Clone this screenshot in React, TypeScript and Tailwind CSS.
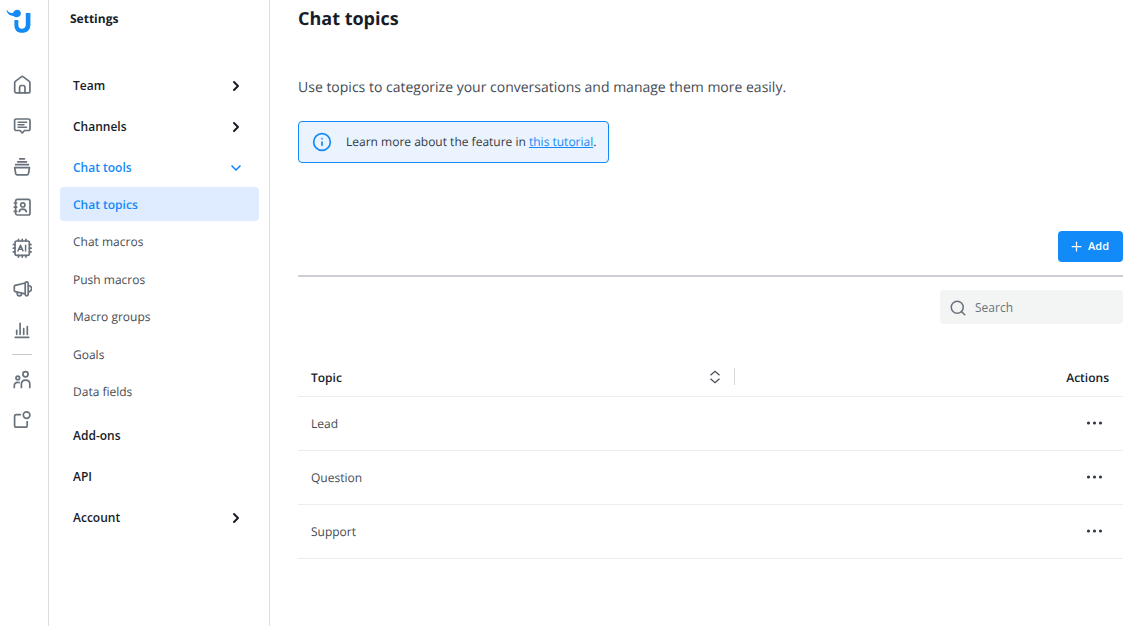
import { ChevronDown, ChevronRight, Info, Plus, Search } from "lucide-react";
import { clsx } from "clsx";

type IconProps = { children: React.ReactNode };

function RailIcon({ children }: IconProps) {
    return (
        <svg
            viewBox="0 0 20 20"
            className="h-5 w-5"
            fill="none"
            stroke="currentColor"
            strokeWidth="1.7"
            strokeLinecap="round"
            strokeLinejoin="round"
            aria-hidden="true"
        >
            {children}
        </svg>
    );
}

const railItems = [
    {
        label: "Home",
        icon: (
            <RailIcon>
                <path d="M2.7 7.6c0-.5.2-.9.6-1.200l6-4.500c.6-.5 1.400-.5 2 0l6 4.500c.4.3.6.7.6 1.200V16.200c0 1.100-.6 1.700-1.700 1.700H4.400c-1.100 0-1.700-.6-1.700-1.700z" />
                <path d="M7.600 17.900v-5.200c0-1.400.8-2.200 2-2.200h1.400c1.200 0 2 .8 2 2.200v5.200" />
            </RailIcon>
        ),
    },
    {
        label: "Conversations",
        icon: (
            <RailIcon>
                <path d="M4.300 3h12c1 0 1.700.7 1.700 1.700v8.100c0 1-.7 1.700-1.700 1.700h-3.800L10.300 17l-2.200-2.500H4.300c-1 0-1.700-.7-1.700-1.700V4.700C2.600 3.700 3.300 3 4.300 3z" />
                <path d="M6 6.200h8.600M6 8.700h6M6 11.200h8.600" strokeWidth="1.400" />
            </RailIcon>
        ),
    },
    {
        label: "Stack",
        icon: (
            <RailIcon>
                <path d="M7.700 1.800h4.800M5.700 4.800h8.800M3.700 7.700h12.800" />
                <path d="M2.700 10.700h14.800l-1 6c-.1.700-.5 1.100-1.200 1.100H4.900c-.7 0-1.100-.4-1.200-1.100z" />
            </RailIcon>
        ),
    },
    {
        label: "Contacts",
        icon: (
            <RailIcon>
                <rect x="3.600" y="2.400" width="14.400" height="15.600" rx="1.800" />
                <circle cx="10.800" cy="7.900" r="2.100" />
                <path d="M7.300 14.600c.3-1.600 1.500-2.400 3.500-2.400s3.200.8 3.500 2.400" />
                <path d="M2.300 6h2.400M2.300 10.200h2.400M2.300 14.400h2.400" />
            </RailIcon>
        ),
    },
    {
        label: "AI",
        icon: (
            <RailIcon>
                <rect x="3" y="3" width="14.400" height="14.400" rx="1.800" />
                <path d="M6.500 1.300V3M10.200 1.300V3M13.900 1.300V3M6.500 17.400v1.700M10.200 17.400v1.700M13.900 17.400v1.700M1.300 6.500H3M1.300 10.200H3M1.300 13.900H3M17.400 6.500h1.700M17.400 10.200h1.700M17.400 13.900h1.700" />
                <path d="M6 12.900l2.500-5.600 2.500 5.600M6.900 11.300h3.200M13.600 7.300v5.600" strokeWidth="1.500" />
            </RailIcon>
        ),
    },
    {
        label: "Campaigns",
        icon: (
            <RailIcon>
                <path d="M3.200 6.400L13.200 4M3.200 6.400c-.6.200-.9.600-.9 1.200v3.900c0 .6.300 1 .9 1.200l10 2.200" />
                <path d="M13.200 4.300c0-1 .7-1.500 1.500-1.500s1.500.5 1.500 1.500v11c0 1-.7 1.500-1.500 1.500s-1.500-.5-1.500-1.500z" />
                <path d="M5.200 13.200v1.300c0 1.500.8 2.400 2.200 2.400s2.200-.9 2.200-2.400M17.600 6.800c1.300.6 2 1.600 2 2.900s-.7 2.300-2 2.900" />
            </RailIcon>
        ),
    },
    {
        label: "Reports",
        icon: (
            <RailIcon>
                <path d="M3.300 17.400h13.400" />
                <path d="M4.700 14.300v-4M8.100 14.300V3.300M11.700 14.300V8.700M15.300 14.300V6.500" />
            </RailIcon>
        ),
    },
];

const railFooterItems = [
    {
        label: "Team",
        icon: (
            <RailIcon>
                <circle cx="13.500" cy="4.300" r="2.600" />
                <circle cx="5.800" cy="7.900" r="1.800" />
                <path d="M9.400 17.500v-3.200c0-2.600 1.600-4.100 4.200-4.100s4.200 1.500 4.200 4.100v3.200M2.300 17.500v-1.700c0-2.200 1.200-3.500 3.300-3.500.6 0 1.100.1 1.500.3" />
            </RailIcon>
        ),
    },
    {
        label: "Apps",
        icon: (
            <RailIcon>
                <circle cx="14.600" cy="5.100" r="3.300" />
                <path d="M8.300 4.600h-4C3.300 4.600 2.600 5.300 2.600 6.300v9.200c0 1 .7 1.700 1.700 1.700h9.200c1 0 1.700-.7 1.700-1.700v-4" />
            </RailIcon>
        ),
    },
];

const chatTools = [
    "Chat topics",
    "Chat macros",
    "Push macros",
    "Macro groups",
    "Goals",
    "Data fields",
];

const topics = ["Lead", "Question", "Support"];

function Rail() {
    return (
        <nav
            aria-label="Main"
            className="flex w-[49px] shrink-0 flex-col border-r border-[#dcdfe2] pr-1 text-[#69727c]"
        >
            <a href="#" aria-label="Dashboard" className="flex h-[65px] justify-center pt-2 pr-1">
                <svg viewBox="0 0 28 28" className="h-7 w-7" fill="none" aria-hidden="true">
                    <path
                        d="M.9 2c1.300 2.300 3.400 3.300 6.100 2.900C7.700 3 9.200 1.700 11.200 1.700c2.100 0 3.700 1.600 3.700 3.600s-1.500 3.900-3.900 3.900c-1.400 0-2.700-.4-3.500-1.300C4.100 7.900 1.300 5.900.5 2.300z"
                        fill="#128af8"
                    />
                    <path
                        d="M8.400 12h3.900v4.700c0 2.700 1.300 4 3.500 4s4-1.300 4-4V5h4.600v11.700c0 5.100-3.300 8.100-8.400 8.100s-7.600-3-7.600-8.100z"
                        fill="#128af8"
                    />
                </svg>
            </a>
            <ul className="flex h-[285px] flex-col justify-between">
                {railItems.map(({ label, icon }) => (
                    <li key={label}>
                        <a href="#" aria-label={label} className="flex h-10 items-center justify-center">
                            {icon}
                        </a>
                    </li>
                ))}
            </ul>
            <hr className="mx-auto mt-1 mb-[5px] w-5 border-[#c5c9cd]" />
            <ul className="flex flex-col">
                {railFooterItems.map(({ label, icon }) => (
                    <li key={label}>
                        <a href="#" aria-label={label} className="flex h-10 items-center justify-center">
                            {icon}
                        </a>
                    </li>
                ))}
            </ul>
        </nav>
    );
}

type MenuItemProps = {
    label: string;
    open?: boolean;
    hasChildren?: boolean;
};

function MenuItem({ label, open, hasChildren }: MenuItemProps) {
    return (
        <button
            className={clsx(
                "flex h-9 w-full items-center justify-between pr-[15px] pl-[13px] font-semibold",
                open ? "text-[#128af8]" : "text-[#171c28]"
            )}
        >
            {label}
            {hasChildren &&
                (open ? (
                    <ChevronDown className="h-4 w-4" strokeWidth={2.5} />
                ) : (
                    <ChevronRight className="h-4 w-4" strokeWidth={3} />
                ))}
        </button>
    );
}

function SettingsMenu() {
    return (
        <aside className="w-[221px] shrink-0 border-r border-[#dcdfe2] px-[10px] pl-[11px] text-xs">
            <h2 className="flex h-[37px] items-center pl-[10px] font-bold text-[#171c28]">
                Settings
            </h2>
            <nav aria-label="Settings" className="pt-[31px]">
                <div className="flex flex-col gap-[5px]">
                    <MenuItem label="Team" hasChildren />
                    <MenuItem label="Channels" hasChildren />
                    <MenuItem label="Chat tools" hasChildren open />
                </div>
                <ul className="mt-px flex h-[222px] flex-col justify-between">
                    {chatTools.map((label, index) => (
                        <li key={label}>
                            <a
                                href="#"
                                className={clsx(
                                    "flex h-[34px] items-center rounded pt-px pl-[13px]",
                                    index === 0
                                        ? "bg-[#dfecff] font-semibold text-[#128af8]"
                                        : "text-[#454b54]"
                                )}
                            >
                                {label}
                            </a>
                        </li>
                    ))}
                </ul>
                <div className="flex flex-col gap-[5px] pt-[9px]">
                    <MenuItem label="Add-ons" />
                    <MenuItem label="API" />
                    <MenuItem label="Account" hasChildren />
                </div>
            </nav>
        </aside>
    );
}

function TopicsTable() {
    return (
        <table className="mt-[34px] w-full table-fixed text-xs text-[#454b54]">
            <thead>
                <tr className="h-[38px] border-b border-[#e9eef2] text-[#171c28]">
                    <th scope="col" className="w-[53%] p-0 pl-[13px] font-semibold">
                        <div className="flex h-[17px] items-center justify-between border-r border-[#d5d8db] pr-3">
                            <span className="pt-[2px]">Topic</span>
                            <button aria-label="Sort by topic">
                                <svg
                                    viewBox="0 0 14 14"
                                    className="h-[14px] w-[14px]"
                                    fill="none"
                                    stroke="#454b54"
                                    strokeWidth="1.200"
                                    aria-hidden="true"
                                >
                                    <path d="M2.500 5.200L7 1.200l4.500 4M2.500 8.800l4.500 4 4.500-4" />
                                </svg>
                            </button>
                        </div>
                    </th>
                    <th scope="col" className="p-0 pt-[2px] pr-[14px] text-right font-semibold">
                        Actions
                    </th>
                </tr>
            </thead>
            <tbody>
                {topics.map((topic) => (
                    <tr key={topic} className="h-[54px] border-b border-[#e9eef2]">
                        <td className="p-0 pt-[2px] pl-[13px]">{topic}</td>
                        <td className="p-0 pr-5">
                            <button aria-label={`${topic} actions`} className="ml-auto block">
                                <svg viewBox="0 0 18 6" className="h-[6px] w-[18px]" fill="#343a42" aria-hidden="true">
                                    <circle cx="3.500" cy="3" r="1.600" />
                                    <circle cx="9.500" cy="3" r="1.600" />
                                    <circle cx="15.500" cy="3" r="1.600" />
                                </svg>
                            </button>
                        </td>
                    </tr>
                ))}
            </tbody>
        </table>
    );
}

export default function App() {
    return (
        <div className="flex min-h-screen bg-white font-['Open_Sans',sans-serif] [text-rendering:geometricPrecision]">
            <Rail />
            <SettingsMenu />
            <main className="min-w-0 flex-1 pr-[22px] pl-7">
                <h1 className="flex h-[38px] items-center text-lg font-bold text-[#171c28]">
                    Chat topics
                </h1>
                <p className="pt-10 text-sm text-[#454b54]">
                    Use topics to categorize your conversations and manage them more easily.
                </p>
                <div className="mt-[23px] flex h-[42px] w-fit items-center gap-[14px] rounded border border-[#128af8] bg-[#ebf3ff] pr-3 pl-[13px] text-xs text-[#343a42]">
                    <Info className="h-5 w-5 text-[#128af8]" />
                    <p>
                        Learn more about the feature in{" "}
                        <a href="#" className="text-[#128af8] underline">
                            this tutorial
                        </a>
                        .
                    </p>
                </div>
                <div className="mt-[68px] flex justify-end border-b-2 border-[#cccfd3] pb-[13px]">
                    <button className="flex h-[31px] items-center gap-1 rounded bg-[#128af8] pr-[14px] pl-[11px] text-[11px] font-semibold text-white">
                        <Plus className="h-[15px] w-[15px]" />
                        Add
                    </button>
                </div>
                <label className="mt-[13px] ml-auto flex h-[34px] w-[183px] items-center gap-2 rounded bg-[#f3f5f5] pt-px pl-[9px]">
                    <Search className="h-[18px] w-[18px] shrink-0 text-[#69727c]" />
                    <input
                        type="text"
                        aria-label="Search"
                        placeholder="Search"
                        className="w-full min-w-0 text-xs outline-none placeholder:text-[#69727c]"
                    />
                </label>
                <TopicsTable />
            </main>
        </div>
    );
}
